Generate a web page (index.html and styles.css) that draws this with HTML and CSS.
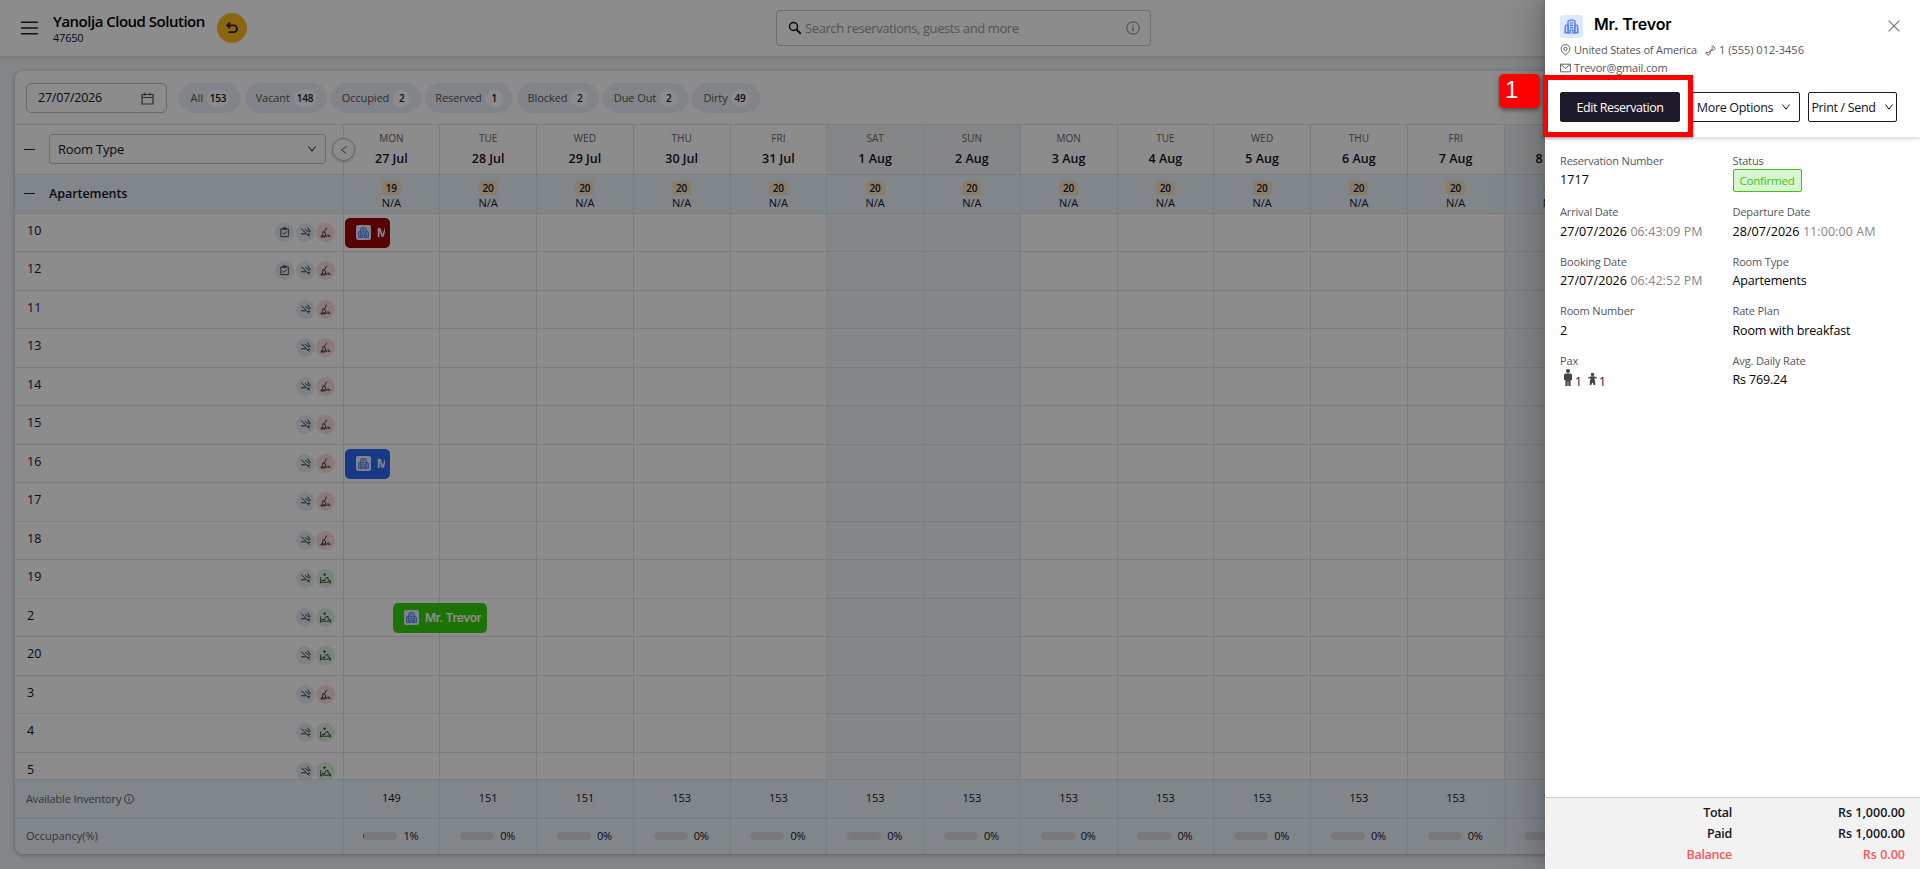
FILE: index.html
```html
<!DOCTYPE html>
<html lang="en">
<head>
<meta charset="utf-8">
<title>Yanolja Cloud Solution</title>
<link rel="stylesheet" href="styles.css">
</head>
<body>
<svg class="defs" width="0" height="0">
  <symbol id="hotel" viewBox="0 0 24 24"><g fill="none" stroke="#4f7df0" stroke-width="1.8" stroke-linejoin="round"><path fill="#c3d5fd" d="M7 21V5.5A2.5 2.5 0 0 1 9.500 3h5A2.500 2.500 0 0 1 17 5.500V21z"/><path fill="#c3d5fd" d="M7 10H5.500A2.500 2.500 0 0 0 3 12.500V21h4zM17 10h1.500a2.500 2.500 0 0 1 2.500 2.500V21h-4z"/><path fill="#e6eeff" d="M10 21v-4h4v4"/><path d="M10 7h4M10 10.300h4M10 13.500h4"/></g></symbol>
  <symbol id="down" viewBox="0 0 12 12"><path d="M1.800 3l4.200 5.600L10.200 3" fill="none" stroke="currentColor" stroke-width="1.200"/></symbol>
  <symbol id="info" viewBox="0 0 14 14"><circle cx="7" cy="7" r="6.200" fill="none" stroke="currentColor"/><path d="M7 6.200V10.300M7 3.800v1.200" stroke="currentColor" stroke-width="1.100"/></symbol>
  <symbol id="task" viewBox="0 0 12 12"><path d="M2 2.200h8.200v8.300H2zM4.300 1h3.400v1.300H4.300z" fill="none" stroke="#333" stroke-width="1"/><path d="M3.800 6.500l1.600 1.500 3-3.200" fill="none" stroke="#333" stroke-width="1"/></symbol>
  <symbol id="nosmoke" viewBox="0 0 12 12"><path d="M1.500 1.800l8.700 8.700M1.200 7.400h5M9.200 7.400v1.400M10.600 7.400v1.400M6 2.300c0 1.500 1 2 2.200 2s1.500.600 1.500 1.700M8 1c1.400.200 1.500 1 1.200 1.700 1.300.300 1.700 1.300 1.700 3" fill="none" stroke="#222" stroke-width="1"/></symbol>
  <symbol id="dirty" viewBox="0 0 12 12"><path d="M7.300.700L4.800 5.200M3.200 5l3 1.700-.600 4.200H.800c1.400-1 2.200-3.200 2.400-5.900zM2.500 10.600l.900-2M4.300 10.700l.400-1.800M7.200 10.900c0-3.200 3.800-3 3.800 0M9.100 9.500v1.400" fill="none" stroke="#3b2c2c" stroke-width="1"/></symbol>
  <symbol id="clean" viewBox="0 0 12 12"><path d="M.700 11.500V4.800M.700 10h10.600M11.300 11.500V8.500L8.800 7.500V5H6.800L4.600 8.200M2 8.200h3.500M5 .300v3M3.500 1.800h3" fill="none" stroke="#2c3b2c" stroke-width="1"/></symbol>
</svg>
<div class="app">
  <header class="topbar">
    <svg class="burger" viewBox="0 0 18 14"><path d="M0 1.200h17M0 7h17M0 12.800h17" stroke="#222" stroke-width="1.400"/></svg>
    <div class="brand"><div class="brand-name">Yanolja Cloud Solution</div><div class="brand-id">47650</div></div>
    <div class="back"><svg width="14" height="14" viewBox="0 0 14 14"><path d="M5 1.700L2.300 4.400 5 7.100M2.300 4.400h6.400a3.300 3.300 0 0 1 0 6.700H3.500" fill="none" stroke="#222" stroke-width="1.800"/></svg></div>
    <div class="search"><svg width="14" height="14" viewBox="0 0 14 14"><circle cx="5.500" cy="5.500" r="4" fill="none" stroke="#111" stroke-width="1.500"/><path d="M8.500 8.500l4.300 4.300" stroke="#111" stroke-width="1.800"/></svg><span>Search reservations, guests and more</span><svg class="search-info"><use href="#info"/></svg></div>
  </header>
  <main class="card">
    <div class="filters">
      <div class="date">27/07/2026<svg width="13" height="13" viewBox="0 0 13 13"><path d="M1 2.500h11v9.500H1zM1 5.500h11M4 .500v3M9 .500v3" fill="none" stroke="#555" stroke-width="1.200"/></svg></div>
      <div class="chips" id="chips"></div>
    </div>
    <div class="grid-head">
      <div class="side"><i class="minus"></i><div class="select">Room Type<svg><use href="#down"/></svg></div></div>
      <div class="days" id="days"></div>
      <div class="prev"><svg width="8" height="10" viewBox="0 0 8 10"><path d="M6.500 1.500L1.500 5l5 3.500" fill="none" stroke="#666" stroke-width="1"/></svg></div>
    </div>
    <div class="group"><div class="side"><i class="minus"></i><b>Apartements</b></div><div class="days" id="rates"></div></div>
    <div class="rooms" id="rooms"></div>
    <div class="foot inventory"><div class="side">Available Inventory<svg><use href="#info"/></svg></div><div class="days" id="inventory"></div></div>
    <div class="foot occupancy"><div class="side">Occupancy(%)</div><div class="days" id="occupancy"></div></div>
  </main>
</div>
<div class="mask"></div>
<aside class="drawer">
  <div class="drawer-head">
    <div class="guest"><span class="guest-icon"><svg><use href="#hotel"/></svg></span><h1>Mr. Trevor</h1><svg class="close" viewBox="0 0 12 12"><path d="M.600.600l10.800 10.800M11.400.600L.600 11.400" stroke="#777" stroke-width="1.200"/></svg></div>
    <div class="contact">
      <svg width="11" height="12" viewBox="0 0 12 13"><path d="M6 12C3 9.600 1.200 7.600 1.200 5.400a4.800 4.800 0 0 1 9.600 0C10.800 7.600 9 9.600 6 12z" fill="none" stroke="#555"/><circle cx="6" cy="5.300" r="1.800" fill="none" stroke="#555"/></svg>
      <span class="country">United States of America</span>
      <svg width="11" height="11" viewBox="0 0 12 12"><path d="M8.300.800L11.200 3.500 9 5.900 7.700 5.300 5.400 7.700 5.900 9 3.600 11.200.800 9.100 1.300 7.900C4.200 9.500 9.400 4.400 7.600 1.700z" fill="none" stroke="#555"/></svg>
      <span class="phone">1 (555) 012-3456</span>
    </div>
    <div class="contact"><svg width="11" height="10" viewBox="0 0 12 11"><path d="M.600 1.300h10.800v8.400H.600zM.800 1.600L6 5.800l5.200-4.200" fill="none" stroke="#555"/></svg><span class="mail">Trevor@gmail.com</span></div>
    <div class="actions">
      <button class="edit">Edit Reservation</button>
      <button class="more">More Options<svg><use href="#down"/></svg></button>
      <button class="print">Print / Send<svg><use href="#down"/></svg></button>
    </div>
  </div>
  <div class="details">
    <div><label>Reservation Number</label><p class="wide">1717</p></div>
    <div><label>Status</label><p><span class="status">Confirmed</span></p></div>
    <div><label>Arrival Date</label><p class="wide low">27/07/2026 <em>06:43:09 PM</em></p></div>
    <div><label>Departure Date</label><p class="wide low">28/07/2026 <em>11:00:00 AM</em></p></div>
    <div><label>Booking Date</label><p class="wide">27/07/2026 <em>06:42:52 PM</em></p></div>
    <div><label>Room Type</label><p>Apartements</p></div>
    <div><label>Room Number</label><p class="low">2</p></div>
    <div><label>Rate Plan</label><p class="low">Room with breakfast</p></div>
    <div><label>Pax</label><div class="pax">
      <svg width="10" height="17" viewBox="0 0 10 17"><circle cx="5" cy="2" r="2" fill="#444"/><path d="M2 4.500h6L9 6v5H7.600v6H5.300v-5h-.600v5H2.400v-6H1V6z" fill="#444"/></svg><span>1</span>
      <svg class="child" width="10" height="14" viewBox="0 0 10 14"><circle cx="5" cy="1.900" r="1.900" fill="#444"/><path d="M0 5.200L3.500 4h3L10 5.200v1.200L7 6.200 8 10v3.800H6.300L5 10.500 3.700 13.800H2V10l1-3.800L0 6.400z" fill="#444"/></svg><span>1</span></div></div>
    <div><label>Avg. Daily Rate</label><p>Rs 769.24</p></div>
  </div>
  <div class="totals">
    <div><span>Total</span><span>Rs 1,000.00</span></div>
    <div><span>Paid</span><span>Rs 1,000.00</span></div>
    <div class="balance"><span>Balance</span><span>Rs 0.00</span></div>
  </div>
</aside>
<div class="highlight"></div>
<div class="step">1</div>
<script src="app.js"></script>
</body>
</html>
```
FILE: styles.css
```css
* { box-sizing: border-box; }
body { margin: 0; width: 1920px; height: 869px; overflow: hidden; background: #f0f2f5; font-family: "Open Sans", "Noto Sans", sans-serif; font-size: 13px; color: #14121f; line-height: 18px; position: relative; }
svg { display: block; flex: none; }
.defs { position: absolute; }
.app { width: 1920px; height: 869px; overflow: hidden; }
.topbar { height: 56px; background: #fff; display: flex; padding-left: 21px; align-items: flex-start; box-shadow: 0 1px 3px rgba(0,0,0,.12); }
.burger { width: 18px; height: 14px; margin-top: 21px; }
.brand { width: 154px; margin: 11px 0 0 14px; white-space: nowrap; }
.brand-name { font-size: 15px; font-weight: 600; line-height: 20px; letter-spacing: -.5px; color: #000; }
.brand-id { font-size: 11px; line-height: 14px; letter-spacing: -.2px; }
.back { width: 30px; height: 30px; border-radius: 50%; background: #ffb820; margin: 13px 0 0 10px; display: flex; align-items: center; justify-content: center; }
.search { width: 375px; height: 36px; margin: 10px 0 0 529px; border: 1px solid #c9c9cc; border-radius: 4px; display: flex; align-items: center; padding: 0 10px 0 11px; color: #9a9a9a; letter-spacing: -.4px; }
.search span { margin-left: 3px; }
.search-info { width: 14px; height: 14px; margin-left: auto; color: #7a7a86; }
.card { margin: 15px 0 0 15px; width: 1920px; height: 783px; background: #fff; border-radius: 8px 0 0 8px; box-shadow: 0 1px 4px rgba(0,30,60,.35); overflow: hidden; }
.filters { height: 54px; display: flex; padding: 12px 0 0 11px; border-bottom: 1px solid #e4e6ea; }
.date { width: 141px; height: 30px; border: 1px solid #c4c4ca; border-radius: 5px; padding: 0 12px 0 11px; display: flex; align-items: center; justify-content: space-between; font-size: 12.500px; letter-spacing: -.25px; }
.chips { display: flex; gap: 4px; margin-left: 12px; }
.chip { height: 30px; border-radius: 15px; background: #ecf3f9; display: flex; align-items: center; justify-content: center; gap: 4px; font-size: 11px; letter-spacing: -.1px; color: #555; white-space: nowrap; }
.chip b { background: #fff; border-radius: 9px; height: 17px; line-height: 17px; min-width: 17px; padding: 0 3px; text-align: center; font-size: 10px; font-weight: 600; color: #14121f; letter-spacing: -.2px; }
.side { width: 328.500px; flex: none; border-right: 1px solid #dfe2e6; display: flex; align-items: center; }
.days { display: flex; }
.day { width: 96.750px; flex: none; border-right: 1px solid #e1e3e7; text-align: center; white-space: nowrap; }
.day.weekend { background: #f2f5f8; }
.grid-head { height: 49.500px; display: flex; position: relative; border-bottom: 1px solid #dfe4e8; }
.minus { width: 11px; height: 1.500px; background: #222; margin-left: 9px; }
.select { width: 277px; height: 30px; margin-left: 14px; border: 1px solid #c6c6c6; border-radius: 3px; display: flex; align-items: center; justify-content: space-between; padding: 0 8px; font-size: 13px; letter-spacing: -.2px; }
.select svg { width: 10px; height: 10px; }
.prev { position: absolute; left: 317px; top: 13px; width: 23px; height: 23px; border: 1px solid #bbb; border-radius: 50%; background: #fff; display: flex; align-items: center; justify-content: center; box-shadow: 0 1px 3px rgba(0,0,0,.2); }
.grid-head .day { padding-top: 5px; }
.dow { font-size: 10px; line-height: 17px; color: #666; }
.dom { font-size: 12.500px; line-height: 23px; font-weight: 600; }
.group { height: 39px; display: flex; background: #ecf5fb; border-bottom: 1px solid #dce2e6; }
.group b { margin-left: 14px; font-weight: 600; font-size: 12.500px; letter-spacing: -.05px; }
.group .day, .foot .day { border-color: #dde5ea; }
.rate { display: block; width: 19px; height: 14px; line-height: 14px; margin: 6px auto 0; background: #f9e4c4; border-radius: 2px; font-size: 10px; font-weight: 600; }
.group .day { font-size: 11px; line-height: 16px; }
.rooms { height: 565px; overflow: hidden; }
.room { height: 38.500px; display: flex; border-bottom: 1px solid #e1e3e6; position: relative; }
.room .side { padding: 0 7.500px 0 12px; gap: 1.500px; font-size: 12.500px; }
.room .side span { margin: -3px auto 0 0; }
.ic { width: 19px; height: 19px; border-radius: 50%; background: #e6edf5; display: flex; align-items: center; justify-content: center; flex: none; }
.ic svg { width: 11px; height: 11px; }
.ic.dirty { background: #fcdedd; }
.ic.clean { background: #def0de; }
.booking { position: absolute; top: 4px; height: 30px; border-radius: 5px; display: flex; align-items: center; padding-left: 11px; gap: 6px; color: #fff; font: 600 12px Inter, sans-serif; letter-spacing: -.3px; }
.booking span { overflow: hidden; white-space: nowrap; margin-right: 5px; }
.booking i { width: 15px; height: 15px; background: #e6eeff; border-radius: 2px; flex: none; padding: 1px; }
.booking svg { width: 13px; height: 13px; }
.red { background: #a00000; left: 330px; width: 45px; }
.blue { background: #2f66f6; left: 330px; width: 45px; }
.green { background: #36cf0a; left: 378px; width: 94px; }
.green span { margin-right: 0; }
.foot { display: flex; background: #ecf5fb; border-top: 1px solid #dce2e6; }
.foot .side { padding-left: 11px; font-size: 11px; color: #5c6066; letter-spacing: -.12px; border-color: #dde5ea; }
.foot .side svg { width: 10px; height: 10px; margin-left: 3px; color: #222; }
.inventory { height: 39.500px; }
.inventory .day { line-height: 36px; font-size: 11px; font-weight: 500; }
.occupancy { height: 36px; }
.occupancy .side { padding-bottom: 1px; letter-spacing: 0; }
.occupancy .day { display: flex; justify-content: center; align-items: center; gap: 6px; padding: 0 1px 1px 0; font-size: 11px; letter-spacing: -.3px; }
.occ-bar { width: 34px; height: 8px; border-radius: 4px; background: #dcdde0; overflow: hidden; }
.occ-bar i { display: block; height: 8px; background: #2a8f86; }
.mask { position: absolute; inset: 0; background: rgba(0,0,0,.45); }
.drawer { position: absolute; right: 0; top: 0; width: 375px; height: 869px; background: #fff; display: flex; flex-direction: column; box-shadow: -6px 0 16px rgba(0,0,0,.08), -9px 0 28px rgba(0,0,0,.10), -12px 0 48px rgba(0,0,0,.08); }
.drawer-head { height: 137px; padding: 15px 20px 0 15px; box-shadow: 0 1px 5px rgba(30,30,80,.25); }
.guest { display: flex; height: 26px; }
.guest-icon { width: 23px; height: 23px; background: #dfe9ff; border-radius: 3px; padding: 3px; }
.guest-icon svg { width: 17px; height: 17px; }
h1 { margin: -3px 0 0 11px; font: 600 16px/24px Inter, sans-serif; color: #000; letter-spacing: -.15px; }
.close { width: 12px; height: 12px; margin: 5px 0 0 auto; }
.contact { display: flex; align-items: center; height: 18px; font-size: 11px; color: #55555c; gap: 3px; white-space: nowrap; }
.country { width: 122px; margin-right: 6px; letter-spacing: -.15px; }
.mail { letter-spacing: -.15px; }
.actions { display: flex; margin-top: 15px; }
button { height: 30px; padding: 0; font: 12.500px "Open Sans", sans-serif; letter-spacing: -.33px; border: 1px solid #1f1a2b; border-radius: 2px; background: #fff; color: #14121f; display: flex; align-items: center; justify-content: center; gap: 8px; white-space: nowrap; }
button svg { width: 10px; height: 10px; }
.edit { width: 120px; background: #1f1a2b; color: #fff; letter-spacing: -.46px; }
.more { width: 112px; margin-left: 8px; }
.print { width: 89px; margin-left: 8px; }
.details { padding: 15px 0 0 15px; display: grid; grid-template-columns: 172.500px 1fr; grid-template-rows: 51px 50px 49px 50px 50px; flex: 1; align-content: start; }
label { display: block; font-size: 11px; line-height: 18px; color: #55555c; letter-spacing: -.15px; }
.details p { margin: 0; line-height: 20px; font-size: 12.500px; color: #000; letter-spacing: -.15px; }
.details p.wide { letter-spacing: .07px; }
.details p.low { padding-top: 1px; }
em { font-style: normal; color: #8a8585; }
.status { display: block; width: 69px; height: 23px; line-height: 22px; margin-top: -1px; border: 1px solid #36c90e; border-radius: 2px; background: #d9f4d2; color: #36c90e; text-align: center; font-size: 11.500px; letter-spacing: -.2px; }
.pax { display: flex; align-items: flex-end; padding-left: 3px; height: 19px; gap: 2px; font-size: 12px; }
.pax svg { margin-bottom: 3px; }
.pax .child { margin-left: 4px; width: 9px; }
.pax span { line-height: 14px; }
.totals { height: 72px; background: #f2f2f2; border-top: 1px solid #d0d0d0; padding: 4px 15px 0 0; font-weight: 600; font-size: 12.500px; letter-spacing: -.3px; }
.totals div { display: flex; height: 21px; line-height: 21px; text-align: right; }
.totals span:first-child { width: 187px; }
.totals span:last-child { margin-left: auto; letter-spacing: 0; }
.balance { color: #ff5757; }
.highlight { position: absolute; left: 1543px; top: 75px; width: 150px; height: 62px; border: 5px solid #f00; box-shadow: 0 1px 3px rgba(0,0,0,.3); }
.step { position: absolute; left: 1499px; top: 74px; width: 41px; height: 34px; border-radius: 5px; background: #f00; color: #fff; font: 24px/31px "Liberation Sans", sans-serif; padding-left: 6px; box-shadow: 0 2px 4px rgba(0,0,0,.45); }
```
FILE: app.js
```js
const fill = (id, html) => { document.getElementById(id).innerHTML = html; };
const days = [['MON','27 Jul'],['TUE','28 Jul'],['WED','29 Jul'],['THU','30 Jul'],['FRI','31 Jul'],['SAT','1 Aug'],['SUN','2 Aug'],['MON','3 Aug'],['TUE','4 Aug'],['WED','5 Aug'],['THU','6 Aug'],['FRI','7 Aug'],['SAT','8 Aug']];
const cls = d => 'day' + (d[0][0] === 'S' ? ' weekend' : '');
const chips = [['All',153,62],['Vacant',148,82],['Occupied',2,90],['Reserved',1,88],['Blocked',2,82],['Due Out',2,85],['Dirty',49,68]];
fill('chips', chips.map(c => `<div class="chip" style="width:${c[2]}px">${c[0]}<b>${c[1]}</b></div>`).join(''));
fill('days', days.map(d => `<div class="${cls(d)}"><div class="dow">${d[0]}</div><div class="dom">${d[1]}</div></div>`).join(''));
fill('rates', days.map((d, i) => `<div class="day"><span class="rate">${i ? 20 : 19}</span>N/A</div>`).join(''));
const rooms = [['10','dirty','red'],['12','dirty'],['11','dirty'],['13','dirty'],['14','dirty'],['15','dirty'],['16','dirty','blue'],['17','dirty'],['18','dirty'],['19','clean'],['2','clean','green'],['20','clean'],['3','dirty'],['4','clean'],['5','clean']];
const icon = (name, extra = '') => `<i class="ic ${extra}"><svg><use href="#${name}"/></svg></i>`;
fill('rooms', rooms.map((r, i) => `<div class="room"><div class="side"><span>${r[0]}</span>${i < 2 ? icon('task') : ''}${icon('nosmoke')}${icon(r[1], r[1])}</div><div class="days">${days.map(d => `<div class="${cls(d)}"></div>`).join('')}</div>${r[2] ? `<div class="booking ${r[2]}"><i><svg><use href="#hotel"/></svg></i><span>Mr. Trevor</span></div>` : ''}</div>`).join(''));
fill('inventory', days.map((d, i) => `<div class="day">${i === 0 ? 149 : i < 3 ? 151 : 153}</div>`).join(''));
fill('occupancy', days.map((d, i) => `<div class="day"><div class="occ-bar"><i style="width:${i ? 0 : 1}px"></i></div>${i ? 0 : 1}%</div>`).join(''));
```
